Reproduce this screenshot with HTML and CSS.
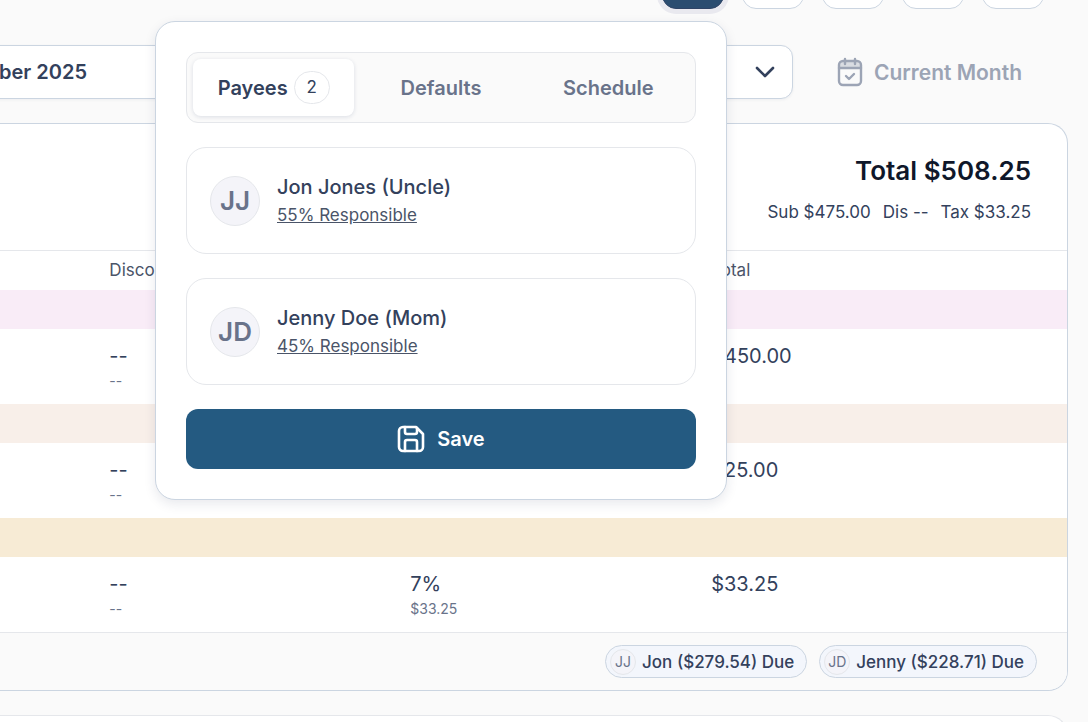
FILE: index.html
```html
<!DOCTYPE html>
<html lang="en">
<head>
  <meta charset="UTF-8">
  <meta name="viewport" content="width=device-width, initial-scale=1.0">
  <title>Invoice - October 2025</title>
  <link rel="stylesheet" href="styles.css">
</head>
<body>
  <main class="page">
    <div class="toolbar">
      <button class="tool active" aria-label="Payees"></button>
      <button class="tool" aria-label="Edit"></button>
      <button class="tool" aria-label="Print"></button>
      <button class="tool" aria-label="Send"></button>
      <button class="tool" aria-label="More"></button>
    </div>

    <div class="filters">
      <div class="month">
        <select class="month-select" aria-label="Month">
          <option>October 2025</option>
        </select>
        <svg class="chevron" width="20" height="12" viewBox="0 0 20 12" fill="none" stroke="currentColor" stroke-width="2.6" stroke-linecap="round" stroke-linejoin="round"><path d="M2 2l8 8 8-8"/></svg>
      </div>
      <button class="current-month" disabled>
        <svg width="26" height="30" viewBox="0 0 26 30" fill="none" stroke="currentColor" stroke-width="2.4" stroke-linecap="round" stroke-linejoin="round">
          <path d="M2 11V8a4 4 0 0 1 4-4h14a4 4 0 0 1 4 4v3z" fill="currentColor" fill-opacity="0.35" stroke="none"/>
          <rect x="2" y="4" width="22" height="24" rx="4"/>
          <path d="M2 11h22M8 2v5M18 2v5M9 19l3 3 5-5"/>
        </svg>
        Current Month
      </button>
    </div>

    <section class="invoice">
      <header class="invoice-header">
        <h2>Total $508.25</h2>
        <p class="breakdown"><span>Sub $475.00</span><span>Dis --</span><span>Tax $33.25</span></p>
      </header>

      <table class="items">
        <colgroup>
          <col class="col-first">
          <col class="col-mid">
          <col class="col-mid">
          <col>
        </colgroup>
        <thead>
          <tr><th></th><th>Discount</th><th></th><th>Total</th></tr>
        </thead>
        <tbody>
          <tr class="band pink"><td colspan="4"></td></tr>
          <tr><td></td><td>--<small>--</small></td><td></td><td>$450.00</td></tr>
          <tr class="band peach"><td colspan="4"></td></tr>
          <tr><td></td><td>--<small>--</small></td><td></td><td>$25.00</td></tr>
          <tr class="band sand"><td colspan="4"></td></tr>
          <tr><td></td><td>--<small>--</small></td><td>7%<small>$33.25</small></td><td>$33.25</td></tr>
        </tbody>
      </table>

      <footer class="invoice-footer">
        <span class="due"><span class="initials">JJ</span>Jon ($279.54) Due</span>
        <span class="due"><span class="initials">JD</span>Jenny ($228.71) Due</span>
      </footer>
    </section>

    <section class="next-card"></section>

    <div class="popover" role="dialog" aria-label="Payees">
      <div class="tabs" role="tablist">
        <button class="tab selected" role="tab" aria-selected="true">Payees <span class="count">2</span></button>
        <button class="tab" role="tab">Defaults</button>
        <button class="tab" role="tab">Schedule</button>
      </div>

      <div class="payee">
        <span class="avatar">JJ</span>
        <div>
          <div class="payee-name">Jon Jones (Uncle)</div>
          <a href="#" class="share">55% Responsible</a>
        </div>
      </div>

      <div class="payee">
        <span class="avatar">JD</span>
        <div>
          <div class="payee-name">Jenny Doe (Mom)</div>
          <a href="#" class="share">45% Responsible</a>
        </div>
      </div>

      <button class="save">
        <svg width="28" height="28" viewBox="0 0 28 28" fill="none" stroke="currentColor" stroke-width="2.6" stroke-linecap="round" stroke-linejoin="round">
          <path d="M6 2h13l7 7v13a4 4 0 0 1-4 4H6a4 4 0 0 1-4-4V6a4 4 0 0 1 4-4z"/>
          <path d="M8 2v5a2 2 0 0 0 2 2h8a2 2 0 0 0 2-2V3M8 26v-9a2 2 0 0 1 2-2h8a2 2 0 0 1 2 2v9"/>
        </svg>
        Save
      </button>
    </div>
  </main>
</body>
</html>
```
FILE: styles.css
```css
* {
  margin: 0;
  padding: 0;
  box-sizing: border-box;
}

body {
  font-family: Inter, 'Open Sans', sans-serif;
  background: #fafafa;
  color: #33415c;
  font-size: 20px;
}

button,
select {
  font: inherit;
  color: inherit;
  border: none;
  background: none;
}

.page {
  position: relative;
  height: 100vh;
  overflow: hidden;
}

/* Top toolbar */
.toolbar {
  display: flex;
  justify-content: flex-end;
  align-items: flex-end;
  gap: 18px;
  height: 15px;
  padding: 0 44px 6px 0;
  overflow: hidden;
}

.tool {
  flex: none;
  width: 62px;
  height: 48px;
  background: white;
  border: 1px solid #cbd5e1;
  border-radius: 14px;
}

.tool.active {
  background: #2b4d70;
  border-color: #2f4466;
  box-shadow: 0 0 0 5px #e9e9ef;
}

/* Month filter */
.filters {
  display: flex;
  align-items: center;
  gap: 44px;
  margin-top: 30px;
}

.month {
  position: relative;
  flex: 0 1 793px;
}

.month-select {
  appearance: none;
  display: block;
  width: calc(100% + 80px);
  height: 54px;
  margin-left: -80px;
  padding: 0 24px 0 32px;
  background: white;
  border: 1px solid #cbd5e1;
  border-radius: 12px;
  box-shadow: 0 1px 3px rgba(30, 50, 90, 0.06);
  font-weight: 600;
}

.chevron {
  position: absolute;
  right: 18px;
  top: 21px;
}

.current-month {
  display: flex;
  align-items: center;
  gap: 11px;
  color: #9ca4b5;
  font-size: 21px;
  font-weight: 600;
}

/* Invoice card */
.invoice {
  margin: 24px 20px 0 0;
  background: white;
  border: 1px solid #cbd5e1;
  border-left: none;
  border-radius: 0 20px 20px 0;
  overflow: hidden;
}

.invoice-header {
  padding: 30px 36px 26px;
  border-bottom: 1px solid #e5e7eb;
  text-align: right;
}

.invoice-header h2 {
  color: #0f172a;
  font-size: 26px;
  line-height: 34px;
  font-weight: 600;
}

.breakdown {
  display: flex;
  justify-content: flex-end;
  gap: 12px;
  margin-top: 12px;
  font-size: 17px;
  line-height: 24px;
}

.items {
  width: 100%;
  table-layout: fixed;
  border-collapse: collapse;
  line-height: 26px;
}

.col-first {
  width: 8%;
}

.col-mid {
  width: 28.2%;
}

.items th {
  height: 39px;
  padding: 0 0 2px 24px;
  text-align: left;
  font-size: 17px;
  font-weight: 400;
  color: #4a5468;
}

.items td {
  height: 75px;
  padding: 14px 0 0 24px;
  vertical-align: top;
}

.items small {
  display: block;
  color: #69738a;
  font-size: 14px;
  line-height: 24px;
}

.items .band td {
  height: 39px;
  padding: 0;
}

.pink {
  background: #f9ecf7;
}

.peach {
  background: #f8efe9;
}

.sand {
  background: #f7ebd5;
}

.invoice-footer {
  display: flex;
  justify-content: flex-end;
  gap: 12px;
  padding: 12px 30px;
  background: #fafafa;
  border-top: 1px solid #e5e7eb;
}

.due {
  display: flex;
  align-items: center;
  gap: 6px;
  height: 33px;
  padding: 0 12px 0 4px;
  background: #f3f6fc;
  border: 1px solid #cbd5e1;
  border-radius: 17px;
  font-size: 17px;
  font-weight: 500;
}

.initials {
  width: 26px;
  height: 26px;
  background: #f4f4f9;
  border: 1px solid #e5e7eb;
  border-radius: 50%;
  color: #69738a;
  font-size: 14px;
  line-height: 24px;
  font-weight: 400;
  text-align: center;
}

.next-card {
  height: 60px;
  margin: 24px 20px 0 0;
  background: white;
  border-top: 1px solid #e5e7eb;
  border-right: 1px solid #e5e7eb;
  border-radius: 0 20px 0 0;
}

/* Payees popover */
.popover {
  position: absolute;
  top: 21px;
  left: 155px;
  display: flex;
  flex-direction: column;
  gap: 24px;
  width: 572px;
  padding: 30px;
  background: white;
  border: 1px solid #cbd5e1;
  border-radius: 20px;
  box-shadow: 0 4px 12px rgba(30, 40, 80, 0.1);
}

.tabs {
  display: grid;
  grid-template-columns: repeat(3, 1fr);
  gap: 6px;
  height: 71px;
  padding: 6px;
  background: #fafafa;
  border: 1px solid #e5e7eb;
  border-radius: 12px;
}

.tab {
  display: flex;
  align-items: center;
  justify-content: center;
  gap: 6px;
  border-radius: 8px;
  color: #69738a;
  font-weight: 600;
}

.tab.selected {
  background: white;
  color: #33415c;
  box-shadow: 0 1px 4px rgba(30, 50, 100, 0.14);
}

.count {
  width: 36px;
  height: 33px;
  border: 1px solid #e5e7eb;
  border-radius: 17px;
  font-size: 17px;
  line-height: 31px;
  font-weight: 400;
}

.payee {
  display: flex;
  align-items: center;
  gap: 17px;
  height: 107px;
  padding: 0 23px;
  border: 1px solid #e5e7eb;
  border-radius: 20px;
}

.avatar {
  width: 50px;
  height: 50px;
  background: #f4f4f9;
  border: 1px solid #e5e7eb;
  border-radius: 50%;
  color: #69738a;
  font-size: 26px;
  line-height: 48px;
  font-weight: 600;
  text-align: center;
}

.payee-name {
  line-height: 28px;
  font-weight: 500;
}

.share {
  display: block;
  color: #4a5468;
  font-size: 17px;
  line-height: 28px;
}

.save {
  display: flex;
  align-items: center;
  justify-content: center;
  gap: 12px;
  height: 60px;
  background: #245a81;
  border-radius: 12px;
  color: white;
  font-weight: 600;
}
```
